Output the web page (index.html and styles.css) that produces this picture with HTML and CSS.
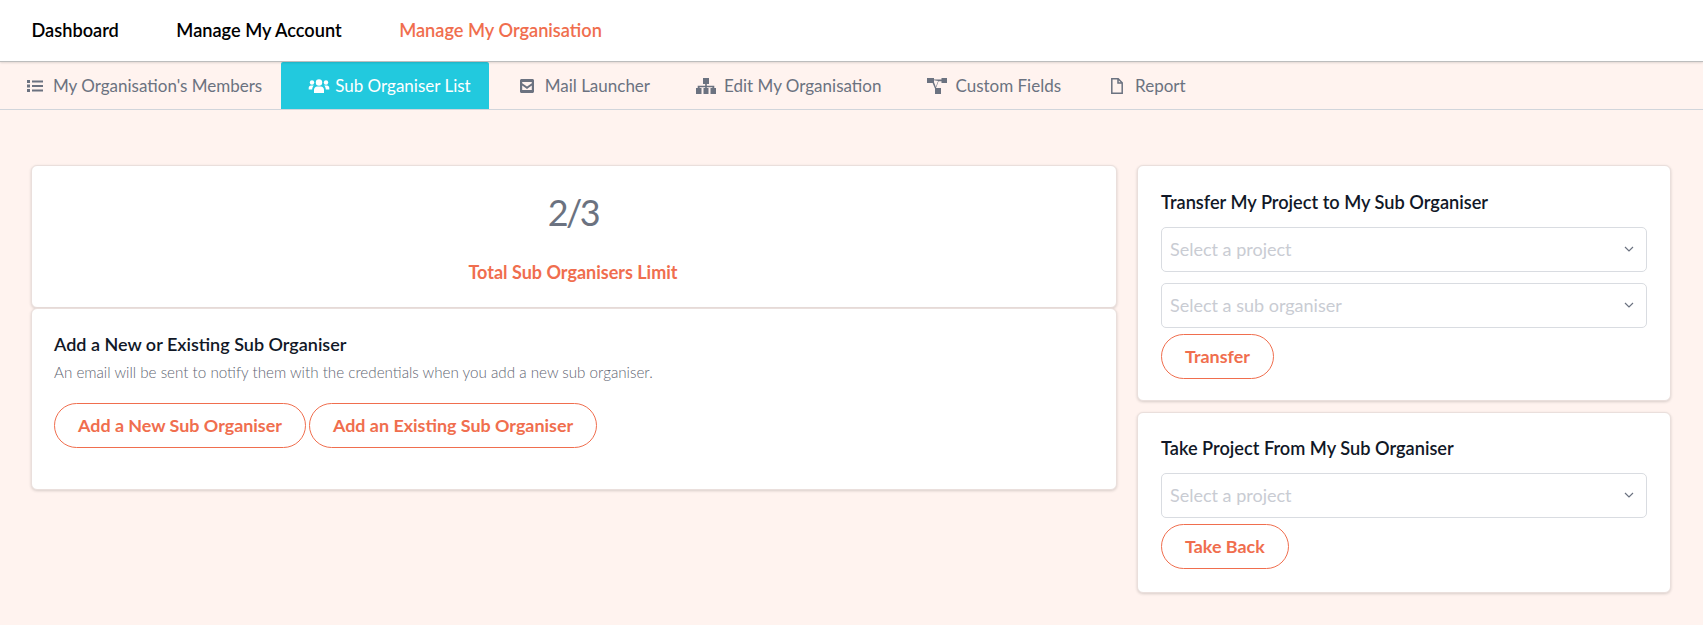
FILE: index.html
```html
<!DOCTYPE html>
<html lang="en">
<head>
<meta charset="utf-8">
<title>Sub Organiser List</title>
<link rel="stylesheet" href="styles.css">
</head>
<body>
<header class="topbar">
  <a class="topbar-link">Dashboard</a>
  <a class="topbar-link">Manage My Account</a>
  <a class="topbar-link is-current">Manage My Organisation</a>
</header>
<nav class="tabs">
  <a class="tab">
    <svg class="tab-icon" viewBox="0 0 22 16"><path fill="currentColor" d="M3 2h3v3H3zM3 6.500h3v3H3zM3 11h3v3H3zM8 2.500h11v2H8zM8 7h11v2H8zM8 11.500h11v2H8z"/></svg>
    My Organisation's Members
  </a>
  <a class="tab is-active">
    <svg class="tab-icon" viewBox="0 0 22 16"><g fill="currentColor"><circle cx="11" cy="4.500" r="3.200"/><circle cx="4" cy="4.500" r="2.200"/><circle cx="18" cy="4.500" r="2.200"/><path d="M6 15v-3.200C6 9.800 7.500 8.500 9 8.500h4c1.500 0 3 1.300 3 3.300V15z"/><path d="M.7 11.500V10c0-1.500 1-2.500 2.300-2.500h2.800C4.800 8.500 4.300 9.700 4.200 11.500zM21.300 11.500V10c0-1.500-1-2.500-2.300-2.500h-2.800c1 1 1.500 2.200 1.600 4z"/></g></svg>
    Sub Organiser List
  </a>
  <a class="tab">
    <svg class="tab-icon" viewBox="0 0 22 16"><path fill="currentColor" fill-rule="evenodd" d="M5.500 1h11c.8 0 1.500.7 1.500 1.500v11c0 .8-.7 1.500-1.500 1.500h-11c-.8 0-1.500-.7-1.500-1.500v-11C4 1.700 4.700 1 5.500 1zM6.200 4v1.300L11 8.600l4.800-3.300V4zM6.200 7.500V12h9.600V7.500L11 10.900z"/></svg>
    Mail Launcher
  </a>
  <a class="tab">
    <svg class="tab-icon" viewBox="0 0 22 16"><path fill="currentColor" d="M8 0h6v6h-2.200v1.700h7.500V10H21v6h-5.500v-6h1.900V9.300h-5.600V10h1.700v6H8.500v-6h1.700v-.7H4.600v.7h1.900v6H1v-6h1.700V7.700h7.500V6H8z"/></svg>
    Edit My Organisation
  </a>
  <a class="tab">
    <svg class="tab-icon" viewBox="0 0 22 16"><path fill="currentColor" d="M1 0h7v1.500h7.500V0H21v5h-5.500V3.200h-3L10 10h5v6H9V10.600L6.600 5H1zM8 2.200v2L9.800 9l2.400-6.300V3z"/></svg>
    Custom Fields
  </a>
  <a class="tab">
    <svg class="tab-icon" viewBox="0 0 22 16"><path fill="none" stroke="currentColor" stroke-width="1.500" d="M5.800.8h6.400L16.200 4.800v10.400H5.800zM12 1v4h4"/></svg>
    Report
  </a>
</nav>
<main class="content">
  <div class="col-main">
    <section class="card stat-card">
      <div class="stat-value">2/3</div>
      <div class="stat-label">Total Sub Organisers Limit</div>
    </section>
    <section class="card add-card">
      <h2 class="card-title add-title">Add a New or Existing Sub Organiser</h2>
      <p class="card-note">An email will be sent to notify them with the credentials when you add a new sub organiser.</p>
      <div class="btn-row">
        <button class="btn">Add a New Sub Organiser</button>
        <button class="btn">Add an Existing Sub Organiser</button>
      </div>
    </section>
  </div>
  <div class="col-side">
    <section class="card side-card">
      <h2 class="card-title side-title">Transfer My Project to My Sub Organiser</h2>
      <div class="select"><span>Select a project</span><svg class="chev" viewBox="0 0 10 6"><path d="M1 1l4 4 4-4" fill="none" stroke="currentColor" stroke-width="1.200"/></svg></div>
      <div class="select"><span>Select a sub organiser</span><svg class="chev" viewBox="0 0 10 6"><path d="M1 1l4 4 4-4" fill="none" stroke="currentColor" stroke-width="1.200"/></svg></div>
      <button class="btn">Transfer</button>
    </section>
    <section class="card side-card">
      <h2 class="card-title side-title">Take Project From My Sub Organiser</h2>
      <div class="select"><span>Select a project</span><svg class="chev" viewBox="0 0 10 6"><path d="M1 1l4 4 4-4" fill="none" stroke="currentColor" stroke-width="1.200"/></svg></div>
      <button class="btn">Take Back</button>
    </section>
  </div>
</main>
</body>
</html>
```
FILE: styles.css
```css
* { box-sizing: border-box; }
html, body { margin: 0; padding: 0; }
body {
  height: 625px;
  overflow: hidden;
  background: #fff3ef;
  font-family: Lato, "Liberation Sans", sans-serif;
  color: #1f2937;
}
.topbar {
  height: 62px;
  background: #fff;
  border-bottom: 1px solid #bdbdbd;
  box-shadow: 0 1px 2px rgba(0,0,0,.12);
  display: flex;
  align-items: center;
  padding: 0 31px 2px 31.5px;
  gap: 57.5px;
  position: relative;
}
.topbar-link {
  font-size: 18.2px;
  font-weight: 600;
  color: #000;
}
.topbar-link.is-current { color: #f06e4e; }
.tabs {
  height: 48px;
  display: flex;
  align-items: stretch;
  border-bottom: 1px solid #d1d5db;
}
.tab {
  display: flex;
  align-items: center;
  gap: 7px;
  padding: 0 18px 0 27px;
  font-size: 17px;
  color: #6b7280;
}
.tab:first-child { padding: 0 19px 0 24px; }
.tab.is-active {
  background: #22c9de;
  color: #fff;
  border-radius: 2px 2px 0 0;
  gap: 5px;
}
.tab-icon { width: 22px; height: 16px; flex: none; }
.content {
  display: flex;
  align-items: flex-start;
  gap: 20px;
  padding: 55px 32px 0 31px;
}
.col-main { width: 1086px; flex: none; }
.col-side { flex: 1; display: flex; flex-direction: column; gap: 11px; }
.card {
  background: #fff;
  border: 1px solid #eadfdc;
  border-radius: 6px;
  box-shadow: 0 1px 3px rgba(0,0,0,.16);
}
.stat-card { height: 143px; text-align: center; padding: 29px 2px 0 0; }
.stat-value { font-size: 36px; line-height: 34px; color: #6b7280; letter-spacing: -2.5px; }
.stat-label { margin-top: 31px; font-size: 18px; font-weight: 700; color: #f06e4e; line-height: 24px; }
.add-card { height: 182px; padding: 23px 22px; }
.card-title { margin: 0; font-size: 18.2px; font-weight: 600; color: #111827; line-height: 24px; }
.add-title { font-size: 18px; }
.card-note { margin: 5px 0 0; font-size: 15.2px; font-weight: 300; color: #5f6673; line-height: 22px; }
.btn-row { display: flex; gap: 3px; margin-top: 20px; }
.btn {
  height: 45px;
  padding: 0 23px 2px;
  border: 1px solid #f06e4e;
  border-radius: 23px;
  background: #fff;
  color: #f06e4e;
  font: 700 17.9px Lato, "Liberation Sans", sans-serif;
}
.side-card { padding: 24px 23px 21px; }
.side-card:last-child { padding: 23px 23px 23px; }
.side-title { margin-bottom: 13px; }
.select {
  height: 45px;
  border: 1px solid #d9dce1;
  border-radius: 5px;
  display: flex;
  align-items: center;
  justify-content: space-between;
  padding: 0 12px 2px 8px;
  margin-bottom: 11px;
  font-size: 18px;
  color: #c9ccd3;
}
.select + .btn { margin-top: -5px; }
.chev { width: 10px; height: 6px; color: #6b7280; }
```
